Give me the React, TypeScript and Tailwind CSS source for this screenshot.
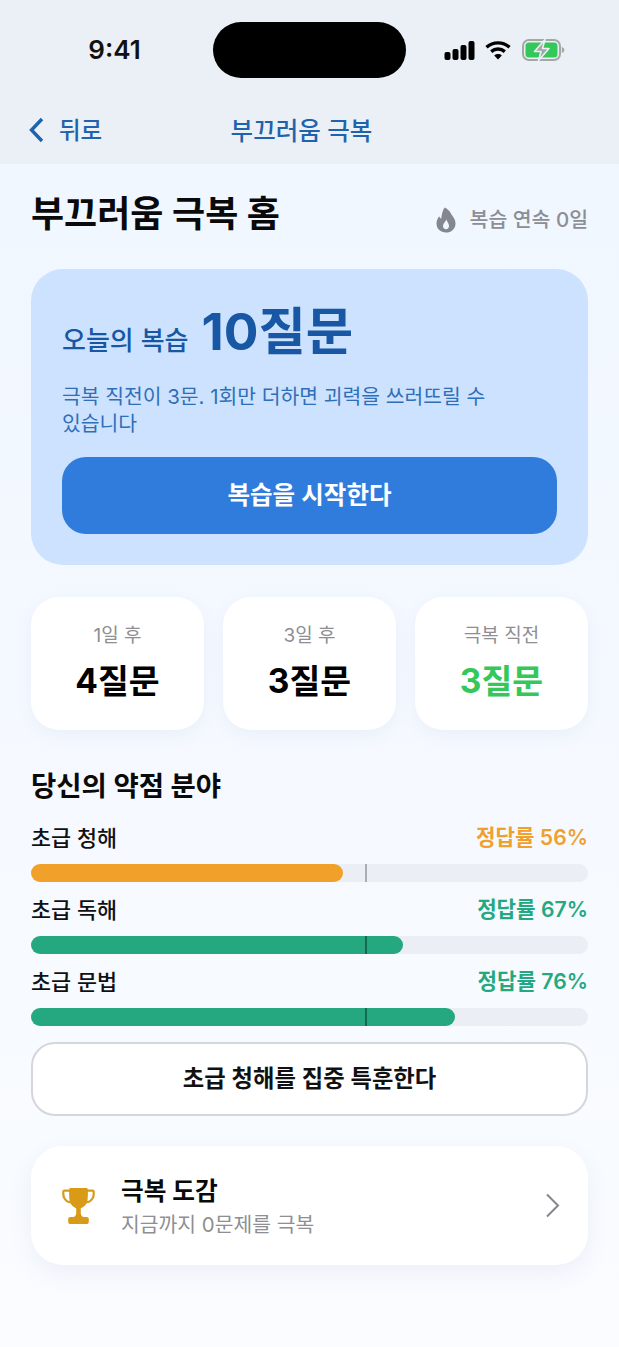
const weakAreas = [
  { name: '초급 청해', rate: 56, text: 'text-[#f0a02c]', bar: 'bg-[#f1a129]', width: 'w-[56%]', marker: 'bg-[#a9acb0]' },
  { name: '초급 독해', rate: 67, text: 'text-[#25a87f]', bar: 'bg-[#25a87f]', width: 'w-[66.7%]', marker: 'bg-[#15694f]' },
  { name: '초급 문법', rate: 76, text: 'text-[#25a87f]', bar: 'bg-[#25a87f]', width: 'w-[76.2%]', marker: 'bg-[#15694f]' },
];

const stats = [
  { label: '1일 후', value: '4질문', color: 'text-black' },
  { label: '3일 후', value: '3질문', color: 'text-black' },
  { label: '극복 직전', value: '3질문', color: 'text-[#34c759]' },
];

const StatusIcons = () => (
  <div className="flex items-center gap-[10px]">
    <svg width="31" height="20" viewBox="0 0 31 20" fill="#000">
      <rect x="0.5" y="12" width="6" height="8" rx="2" />
      <rect x="8.5" y="9" width="6" height="11" rx="2" />
      <rect x="16.5" y="5" width="6" height="15" rx="2" />
      <rect x="24.5" y="1" width="6" height="19" rx="2" />
    </svg>
    <svg width="26" height="20" viewBox="0 0 26 20" fill="none" stroke="#000" strokeWidth="3.4">
      <path d="M1.5 7.2C8 1.4 18 1.4 24.5 7.2" />
      <path d="M6.2 11.6C10.2 8.2 15.8 8.2 19.8 11.6" />
      <path d="M13 19.5L9.2 15.4C11.4 13.6 14.6 13.6 16.8 15.4Z" fill="#000" stroke="none" />
    </svg>
    <svg className="ml-[1px]" width="43" height="22" viewBox="0 0 43 22" fill="none">
      <rect x="1" y="1" width="37" height="20" rx="6" stroke="#a3a8a6" strokeWidth="2" />
      <rect x="3.5" y="3.5" width="32" height="15" rx="3.5" fill="#34c759" />
      <path d="M39.8 8v6c1.6-.4 2.6-1.6 2.6-3s-1-2.6-2.6-3Z" fill="#a3a8a6" />
      <path d="M23 0.5L12.5 12.5H19L16.5 21.5L27 9.5H20.5Z" fill="#a3a8a6" stroke="#ebf0f6" strokeWidth="1.6" strokeLinejoin="round" />
    </svg>
  </div>
);

const Flame = () => (
  <svg width="20" height="26" viewBox="0 0 20 26">
    <path
      fillRule="evenodd"
      fill="#84878f"
      d="M8.5 0.5C13 2.5 14.6 5.6 16 8.2C18 11 19.5 13.4 19.5 16.4C19.5 21.9 15.3 25.5 10 25.5C4.7 25.5 0.5 21.9 0.5 16.6C0.5 13.6 1.8 11 3.2 9.2C3.6 10.4 4.2 11.2 5.2 11.8C5.6 7.6 6.6 3.8 8.5 0.5ZM10.4 12.6C9.8 14.6 7 16.2 7 19C7 20.9 8.3 22.2 10 22.2C11.8 22.2 13 20.9 13 19C13 16.6 11.2 15 10.4 12.6Z"
    />
  </svg>
);

const Trophy = () => (
  <svg width="33" height="36" viewBox="0 0 33 36" fill="#d99a17">
    <path
      fillRule="evenodd"
      d="M9 0H24C25 0 25.8 .7 25.9 1.6H30.5C31.9 1.6 32.8 2.5 32.8 3.9V6C32.8 11 29.3 14.6 24.4 15.6C22.9 18.2 20.9 19.7 18.8 20.3V25C18.8 27 19.8 28.5 21.5 29H24.5C25.9 29 26.8 29.9 26.8 31.3V33.7C26.8 35.1 25.9 36 24.5 36H8.5C7.1 36 6.2 35.1 6.2 33.7V31.3C6.2 29.9 7.1 29 8.5 29H11.5C13.2 28.5 14.2 27 14.2 25V20.3C12.1 19.7 10.1 18.2 8.6 15.6C3.7 14.6 0.2 11 0.2 6V3.9C0.2 2.5 1.1 1.6 2.5 1.6H7.1C7.2 .7 8 0 9 0ZM2.4 3.8V6C2.4 9.4 4.4 12.2 7.6 13.2C7.2 10.4 7.1 7 7.1 3.8ZM30.6 3.8H25.9C25.9 7 25.8 10.4 25.4 13.2C28.6 12.2 30.6 9.4 30.6 6Z"
    />
  </svg>
);

export default function App() {
  return (
    <div className="min-h-[1347px] w-[619px] overflow-hidden bg-linear-to-b from-[#eff6ff] to-[#fafcff] font-['Inter','Noto_Sans_CJK_KR',sans-serif]">
      <header className="h-[164px] bg-[#ebf0f6]">
        <div className="flex h-[100px] items-start pt-[22px]">
          <span className="mt-[12px] w-[213px] pl-[16px] text-center text-[26px] leading-[32px] font-semibold text-[#111]">9:41</span>
          <div className="h-[56px] w-[193px] rounded-[28px] bg-black" />
          <div className="mt-[17px] ml-[38px]">
            <StatusIcons />
          </div>
        </div>
        <div className="relative flex h-[60px] items-center pl-[29px] text-[#1f63ad]">
          <svg width="15" height="26" viewBox="0 0 15 26" fill="none" stroke="currentColor" strokeWidth="3.4">
            <path d="M13 2L2.5 13L13 24" />
          </svg>
          <span className="mt-[2px] ml-[15px] text-[23.5px] font-medium">뒤로</span>
          <span className="absolute left-0 mt-[2px] w-full -translate-x-[8px] text-center text-[24.5px] font-medium">부끄러움 극복</span>
        </div>
      </header>

      <main className="flex flex-col px-[31px]">
        <div className="mt-[23px] flex items-center justify-between">
          <h1 className="pt-[1px] text-[36px] leading-[53px] font-bold text-[#0a0a0a]">부끄러움 극복 홈</h1>
          <div className="mt-[12px] flex items-center gap-[14px]">
            <Flame />
            <span className="text-[20.5px] font-medium text-[#8c8e94]">복습 연속 0일</span>
          </div>
        </div>

        <section className="mt-[28px] h-[296px] rounded-[32px] bg-[#cde2fe] px-[31px] pt-[29px]">
          <div className="flex items-baseline gap-[13px] text-[#1757a3]">
            <span className="text-[26px] font-medium">오늘의 복습</span>
            <span className="text-[51.5px] leading-[66px] font-bold">10질문</span>
          </div>
          <p className="mt-[19px] w-[450px] text-[20.4px] leading-[27px] break-keep text-[#2f6fb8]">
            극복 직전이 3문. 1회만 더하면 괴력을 쓰러뜨릴 수 있습니다
          </p>
          <button type="button" className="mt-[20px] h-[77px] w-full rounded-[24px] bg-[#2f7cdc] text-[24.5px] font-semibold text-white">
            복습을 시작한다
          </button>
        </section>

        <section className="mt-[32px] grid grid-cols-3 gap-[19px]">
          {stats.map((s) => (
            <div key={s.label} className="flex h-[133px] flex-col items-center justify-center rounded-[28px] bg-white shadow-[0_6px_18px_rgba(60,90,140,0.06)]">
              <span className="text-[19px] text-[#8e8e93]">{s.label}</span>
              <span className={`mt-[6px] text-[33.5px] leading-[48px] font-bold ${s.color}`}>{s.value}</span>
            </div>
          ))}
        </section>

        <h2 className="mt-[36px] text-[27.5px] leading-[40px] font-bold text-[#0a0a0a]">당신의 약점 분야</h2>

        <section className="mt-[15px] flex flex-col gap-[11px]">
          {weakAreas.map((a) => (
            <div key={a.name}>
              <div className="flex h-[34px] items-center justify-between">
                <span className="text-[21.8px] font-medium text-[#111]">{a.name}</span>
                <span className={`text-[21.2px] font-semibold ${a.text}`}>정답률 {a.rate}%</span>
              </div>
              <div className="relative mt-[9px] h-[18px] rounded-full bg-[#ebeff5]">
                <div className={`h-full rounded-full ${a.bar} ${a.width}`} />
                <div className={`absolute top-0 left-[60%] h-full w-[2px] ${a.marker}`} />
              </div>
            </div>
          ))}
        </section>

        <button type="button" className="mt-[16px] h-[74px] rounded-[24px] border-2 border-[#d3d7dc] bg-white text-[23.3px] font-semibold text-[#111]">
          초급 청해를 집중 특훈한다
        </button>

        <section className="mt-[30px] flex h-[119px] items-center rounded-[32px] bg-white pr-[28px] pl-[31px] shadow-[0_8px_24px_rgba(60,90,140,0.07)]">
          <Trophy />
          <div className="ml-[26px] flex flex-col">
            <span className="text-[24.7px] leading-[38px] font-bold text-[#0a0a0a]">극복 도감</span>
            <span className="text-[20.4px] leading-[30px] text-[#8e8e93]">지금까지 0문제를 극복</span>
          </div>
          <svg className="ml-auto" width="15" height="25" viewBox="0 0 15 25" fill="none" stroke="#85858a" strokeWidth="2">
            <path d="M2 1.5L13 12.5L2 23.5" />
          </svg>
        </section>
      </main>
    </div>
  );
}
